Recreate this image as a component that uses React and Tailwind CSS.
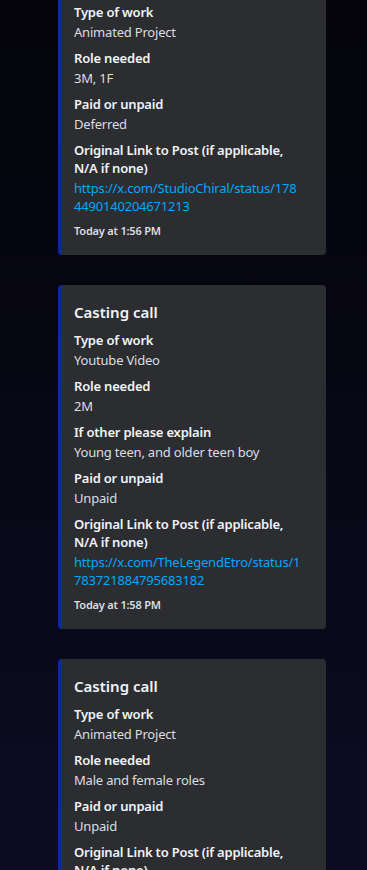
import React from "react";

const posts = [
  {
    fields: [
      ["Type of work", "Animated Project"],
      ["Role needed", "3M, 1F"],
      ["Paid or unpaid", "Deferred"],
    ],
    link: ["https://x.com/StudioChiral/status/178", "4490140204671213"],
    time: "Today at 1:56 PM",
  },
  {
    fields: [
      ["Type of work", "Youtube Video"],
      ["Role needed", "2M"],
      ["If other please explain", "Young teen, and older teen boy"],
      ["Paid or unpaid", "Unpaid"],
    ],
    link: ["https://x.com/TheLegendEtro/status/1", "783721884795683182"],
    time: "Today at 1:58 PM",
  },
  {
    fields: [
      ["Type of work", "Animated Project"],
      ["Role needed", "Male and female roles"],
      ["Paid or unpaid", "Unpaid"],
    ],
    link: ["https://x.com/", ""],
    time: "Today at 2:03 PM",
  },
];

const Field = ({ name, children }) => (
  <div className="flex flex-col">
    <div className="text-[13px] leading-[18px] tracking-[-0.2px] font-semibold text-[#f2f3f5] mb-[2px]">
      {name}
    </div>
    <div className="text-[13px] leading-[18px] tracking-[-0.2px] text-[#dbdee1]">{children}</div>
  </div>
);

const Embed = ({ post }) => (
  <div className="w-[268px] bg-[#2b2d31] rounded-[4px] border-l-4 border-[#0b2a9c] pt-2 pr-4 pb-4 pl-3">
    <div className="mt-2 text-[15px] leading-[22px] font-semibold text-[#f2f3f5]">
      Casting call
    </div>
    <div className="mt-2 flex flex-col gap-2">
      {post.fields.map(([n, v]) => (
        <Field key={n} name={n}>
          {v}
        </Field>
      ))}
      <Field name={<>Original Link to Post (if applicable,<br />N/A if none)</>}>
        <span className="block whitespace-nowrap text-[#00a8fc]">{post.link[0]}</span>
        <span className="block whitespace-nowrap text-[#00a8fc]">{post.link[1]}</span>
      </Field>
    </div>
    <div className="mt-2 text-[11px] leading-[16px] tracking-[-0.2px] font-semibold text-[#dbdee1]">
      {post.time}
    </div>
  </div>
);

export default function App() {
  return (
    <div
      className="h-[870px] overflow-hidden bg-gradient-to-b from-[#04040a] to-[#0d0c22]"
      style={{ fontFamily: '"Noto Sans", "Open Sans", sans-serif' }}
    >
      <div className="mt-[-43px] pl-[58px] flex flex-col gap-[30px]">
        {posts.map((p, i) => (
          <Embed key={i} post={p} />
        ))}
      </div>
    </div>
  );
}
